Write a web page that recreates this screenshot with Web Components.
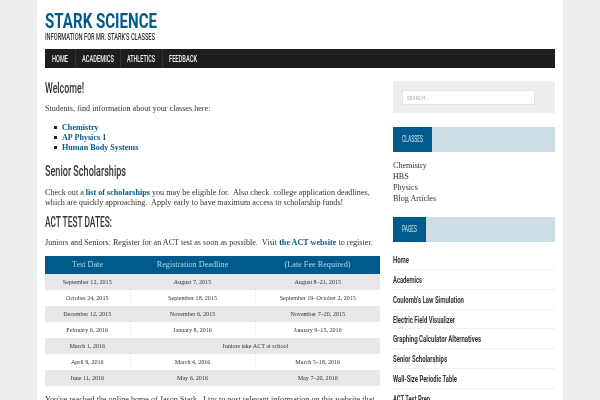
<!DOCTYPE html>
<html>
<head>
<meta charset="utf-8">
<title>Stark Science</title>
<style>
html, body { margin: 0; height: 400px; overflow: hidden; background: #eeeeee; }
body { font-family: "Liberation Serif", serif; color: #333; }
</style>
</head>
<body>
<site-page>
  <site-header slot="header"></site-header>
  <nav-bar slot="nav"></nav-bar>
  <main-content slot="main"></main-content>
  <side-bar slot="side"></side-bar>
</site-page>
<script>
const NARROW = 'Roboto, "Liberation Sans", sans-serif'
const BODY = '"Liberation Serif", serif'

/**
 * Text squeezed to a given width, there is no condensed font installed
 */
class FitText extends HTMLElement {
  constructor () {
    super()
    this.attachShadow({ mode: 'open' })
    this.shadowRoot.innerHTML = `
<style>
:host { display: inline-block; white-space: nowrap; }
span { display: inline-block; transform-origin: 0 50%; }
</style>
<span><slot></slot></span>`
  }

  connectedCallback () {
    const w = Number(this.getAttribute('w'))
    const span = this.shadowRoot.querySelector('span')
    const natural = span.getBoundingClientRect().width
    if (natural > 0) span.style.transform = `scaleX(${w / natural})`
    this.style.width = w + 'px'
  }
}

class SitePage extends HTMLElement {
  constructor () {
    super()
    this.attachShadow({ mode: 'open' })
    this.shadowRoot.innerHTML = `
<style>
:host { display: block; width: 510px; height: 400px; margin: 0 37px; padding: 0 8px; background: #fff; overflow: hidden; }
.cols { display: flex; gap: 13px; }
.main { width: 335px; flex: none; padding-top: 11px; }
.side { width: 162px; flex: none; padding-top: 13px; }
</style>
<slot name="header"></slot>
<slot name="nav"></slot>
<div class="cols">
  <div class="main"><slot name="main"></slot></div>
  <div class="side"><slot name="side"></slot></div>
</div>`
  }
}

class SiteHeader extends HTMLElement {
  constructor () {
    super()
    this.attachShadow({ mode: 'open' })
    this.shadowRoot.innerHTML = `
<style>
:host { display: block; height: 49px; padding-top: 10px; box-sizing: border-box; font-family: ${NARROW}; will-change: opacity; }
h1 { margin: 0; font-size: 21px; line-height: 22px; font-weight: 700; color: #005a8c; }
p { margin: 0; font-size: 8.5px; line-height: 11px; color: #333; font-weight: 500; }
</style>
<h1><fit-text w="112">STARK SCIENCE</fit-text></h1>
<p><fit-text w="110">INFORMATION FOR MR. STARK'S CLASSES</fit-text></p>`
  }
}

class NavBar extends HTMLElement {
  constructor () {
    super()
    this.attachShadow({ mode: 'open' })
    this.shadowRoot.innerHTML = `
<style>
:host { display: flex; height: 19px; padding-left: 1px; background: #1e1e1e; font-family: ${NARROW}; }
a { display: flex; align-items: center; padding: 0 6.3px; color: #f0f0f0; font-size: 9px; font-weight: 500; border-right: 1px solid #333; will-change: opacity; }
a:last-child { border-right: 0; }
</style>
<a><fit-text w="16">HOME</fit-text></a>
<a><fit-text w="32">ACADEMICS</fit-text></a>
<a><fit-text w="28">ATHLETICS</fit-text></a>
<a><fit-text w="28">FEEDBACK</fit-text></a>`
  }
}

class DatesTable extends HTMLElement {
  constructor () {
    super()
    this.attachShadow({ mode: 'open' })
    this.shadowRoot.innerHTML = `
<style>
:host { display: block; }
table { border-collapse: collapse; table-layout: fixed; width: 335px; text-align: center; }
th { height: 18px; padding: 0; background: #005a8c; color: #a9d6ee; font-size: 8.2px; font-weight: 400; }
td { height: 16px; padding: 0; font-size: 6.1px; color: #333; border-right: 1px solid #f4f4f4; }
td:last-child { border-right: 0; }
tr:nth-child(odd) td { background: #e8e7e5; border-right-color: #e8e7e5; }
</style>
<table>
  <colgroup><col style="width:85px"><col style="width:125px"><col style="width:125px"></colgroup>
  <thead><tr><th>Test Date</th><th>Registration Deadline</th><th>(Late Fee Required)</th></tr></thead>
  <tbody>
    <tr><td>September 12, 2015</td><td>August 7, 2015</td><td>August 8–21, 2015</td></tr>
    <tr><td>October 24, 2015</td><td>September 18, 2015</td><td>September 19–October 2, 2015</td></tr>
    <tr><td>December 12, 2015</td><td>November 6, 2015</td><td>November 7–20, 2015</td></tr>
    <tr><td>February 6, 2016</td><td>January 8, 2016</td><td>January 9–15, 2016</td></tr>
    <tr><td>March 1, 2016</td><td colspan="2">Juniors take ACT at school</td></tr>
    <tr><td>April 9, 2016</td><td>March 4, 2016</td><td>March 5–18, 2016</td></tr>
    <tr><td>June 11, 2016</td><td>May 6, 2016</td><td>May 7–20, 2016</td></tr>
  </tbody>
</table>`
  }
}

class MainContent extends HTMLElement {
  constructor () {
    super()
    this.attachShadow({ mode: 'open' })
    this.shadowRoot.innerHTML = `
<style>
:host { display: block; font-family: ${BODY}; font-size: 8.15px; line-height: 10px; color: #333; will-change: opacity; }
h2 { margin: 0; font-family: ${NARROW}; font-weight: 500; color: #333; font-size: 14px; line-height: 18px; }
p { margin: 0; white-space: pre-wrap; }
ul { margin: 9px 0 0; padding: 0 0 0 9px; list-style: none; }
li { display: flex; align-items: center; gap: 5px; height: 9.8px; }
li::before { content: ''; width: 3px; height: 3px; background: #222; }
a { color: #005a8c; font-weight: 700; text-decoration: none; }
dates-table { margin-top: 7.5px; }
</style>
<h2><fit-text w="39">Welcome!</fit-text></h2>
<p style="margin-top:7px">Students, find information about your classes here:</p>
<ul>
  <li><a>Chemistry</a></li>
  <li><a>AP Physics 1</a></li>
  <li><a>Human Body Systems</a></li>
</ul>
<h2 style="margin-top:9.5px"><fit-text w="81">Senior Scholarships</fit-text></h2>
<p style="margin-top:8px">Check out a <a>list of scholarships</a> you may be eligible for.  Also check  college application deadlines, which are quickly approaching.  Apply early to have maximum access to scholarship funds!</p>
<h2 style="margin-top:5px"><fit-text w="67">ACT TEST DATES:</fit-text></h2>
<p style="margin-top:7.5px">Juniors and Seniors: Register for an ACT test as soon as possible.  Visit <a>the ACT website</a> to register.</p>
<dates-table></dates-table>
<p style="margin-top:9px">You've reached the online home of Jason Stark.  I try to post relevant information on this website that</p>`
  }
}

class SearchBox extends HTMLElement {
  constructor () {
    super()
    this.attachShadow({ mode: 'open' })
    this.shadowRoot.innerHTML = `
<style>
:host { display: block; background: #eeeeee; padding: 9px 20px 8px 9px; height: 32px; box-sizing: border-box; }
div { height: 15px; box-sizing: border-box; background: #fff; border: 1px solid #e2e2e2; padding-left: 4px; font-family: ${NARROW}; font-size: 6px; line-height: 13px; color: #aaa; }
</style>
<div><fit-text w="23">SEARCH ...</fit-text></div>`
  }
}

class WidgetTitle extends HTMLElement {
  constructor () {
    super()
    this.attachShadow({ mode: 'open' })
    this.shadowRoot.innerHTML = `
<style>
:host { display: block; height: 25px; background: #cddde6; font-family: ${NARROW}; }
span { display: inline-block; height: 25px; line-height: 25px; padding: 0 9px; background: #005a8c; color: #cfe6f2; font-size: 8.5px; }
</style>
<span><slot></slot></span>`
  }
}

class SideBar extends HTMLElement {
  constructor () {
    super()
    this.attachShadow({ mode: 'open' })
    this.shadowRoot.innerHTML = `
<style>
:host { display: block; will-change: opacity; }
widget-title { margin-top: 14px; }
.links { margin-top: 9.4px; font-family: ${BODY}; font-size: 8.15px; line-height: 10.7px; color: #333; }
.pages { margin-top: 8.2px; font-family: ${NARROW}; font-weight: 700; font-size: 9px; color: #333; }
.pages div { height: 19.8px; line-height: 20px; box-sizing: border-box; border-bottom: 1px solid #f0f0f0; }
</style>
<search-box></search-box>
<widget-title><fit-text w="21">CLASSES</fit-text></widget-title>
<div class="links">
  <div>Chemistry</div><div>HBS</div><div>Physics</div><div>Blog Articles</div>
</div>
<widget-title style="margin-top:12.8px"><fit-text w="15">PAGES</fit-text></widget-title>
<div class="pages">
  <div><fit-text w="16">Home</fit-text></div>
  <div><fit-text w="29">Academics</fit-text></div>
  <div><fit-text w="71">Coulomb's Law Simulation</fit-text></div>
  <div><fit-text w="62">Electric Field Visualizer</fit-text></div>
  <div><fit-text w="88">Graphing Calculator Alternatives</fit-text></div>
  <div><fit-text w="54">Senior Scholarships</fit-text></div>
  <div><fit-text w="64">Wall-Size Periodic Table</fit-text></div>
  <div><fit-text w="37">ACT Test Prep</fit-text></div>
</div>`
  }
}

customElements.define('fit-text', FitText)
customElements.define('site-page', SitePage)
customElements.define('site-header', SiteHeader)
customElements.define('nav-bar', NavBar)
customElements.define('dates-table', DatesTable)
customElements.define('main-content', MainContent)
customElements.define('search-box', SearchBox)
customElements.define('widget-title', WidgetTitle)
customElements.define('side-bar', SideBar)
</script>
</body>
</html>
